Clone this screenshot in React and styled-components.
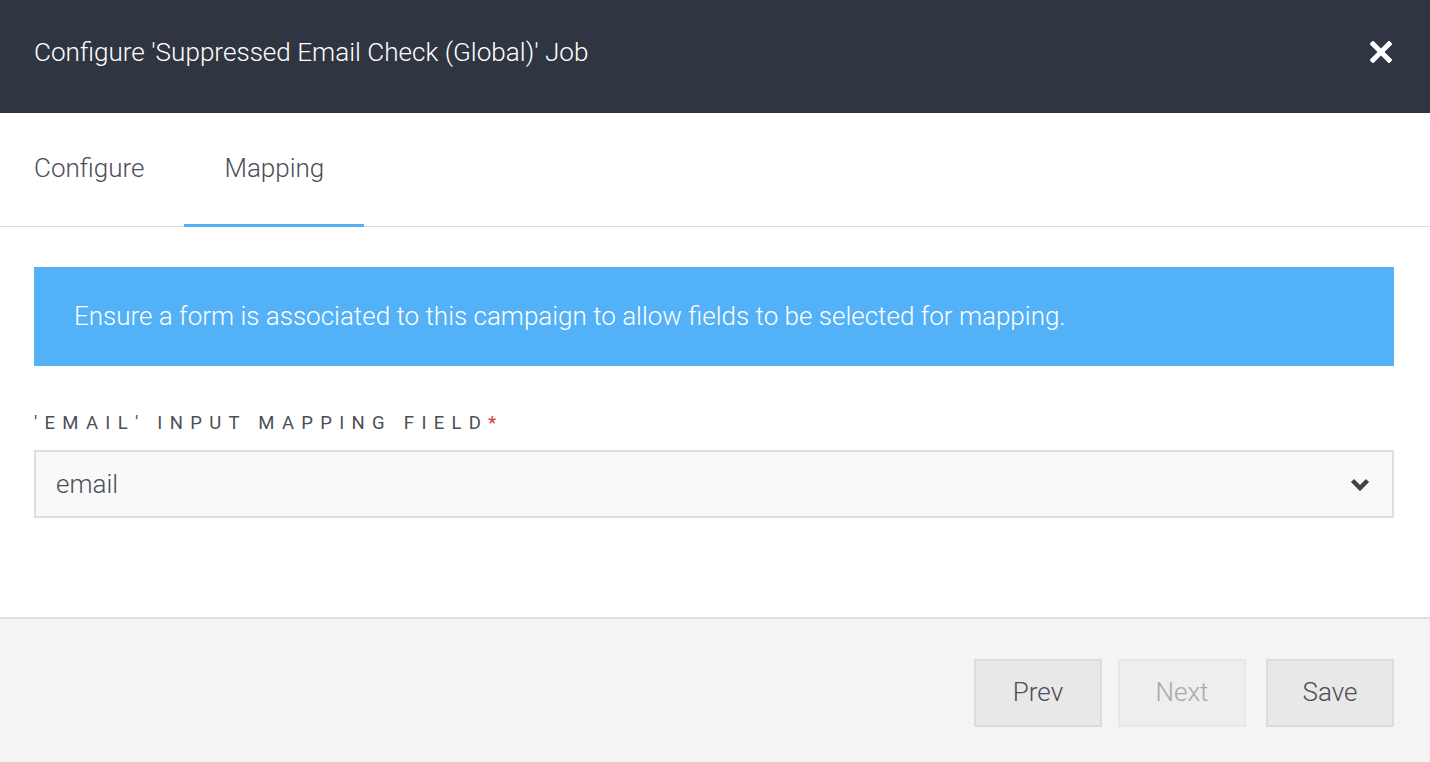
import React from "react";
import styled, { createGlobalStyle } from "styled-components";

const Global = createGlobalStyle`
  html, body { margin: 0; padding: 0; background: #fff; }
  body { font-family: Roboto, "Noto Sans", sans-serif; -webkit-font-smoothing: antialiased; }
  * { box-sizing: border-box; }
`;

const Modal = styled.div`
  width: 1430px;
  height: 762px;
  display: flex;
  flex-direction: column;
  background: #fff;
  overflow: hidden;
`;

const Header = styled.header`
  height: 113px;
  background: #2f3541;
  display: flex;
  align-items: center;
  justify-content: space-between;
  padding: 0 38px 10px 34px;
`;

const Title = styled.h1`
  margin: 0;
  font-size: 26.1px;
  font-weight: 300;
  color: #fff;
`;

const CloseButton = styled.button`
  background: none;
  border: 0;
  padding: 0;
  display: flex;
  cursor: pointer;
`;

const Tabs = styled.nav`
  height: 114px;
  display: flex;
  padding-left: 34px;
  border-bottom: 1px solid #dcdcdc;
`;

const Tab = styled.div`
  display: flex;
  align-items: center;
  padding: 0 40px 2px;
  &:first-child { padding-left: 0; }
  font-size: 26px;
  font-weight: 300;
  color: #4b4e57;
  border-bottom: 3px solid ${(p) => (p.$active ? "#52b1f7" : "transparent")};
  margin-bottom: -1px;
`;

const Body = styled.div`
  flex: 1;
  padding: 40px 36px 0 34px;
  display: flex;
  flex-direction: column;
`;

const Alert = styled.div`
  height: 99px;
  background: #52b1f7;
  color: #fff;
  font-size: 26px;
  font-weight: 300;
  display: flex;
  align-items: center;
  padding: 0 40px 2px;
`;

const Label = styled.label`
  margin-top: 46px;
  font-size: 18.5px;
  letter-spacing: 7.3px;
  color: #4b4e57;
  text-transform: uppercase;
  display: flex;
  align-items: baseline;
`;

const Required = styled.span`
  color: #e0352b;
`;

const Select = styled.div`
  margin-top: 16px;
  height: 68px;
  background: #f9f9f9;
  border: 2px solid #dedede;
  display: flex;
  align-items: center;
  justify-content: space-between;
  padding: 0 22px 0 20px;
  font-size: 26px;
  font-weight: 300;
  color: #4b4e57;
`;

const Footer = styled.footer`
  height: 145px;
  background: #f4f4f4;
  border-top: 2px solid #dedede;
  display: flex;
  justify-content: flex-end;
  align-items: flex-start;
  padding: 40px 36px 0 0;
`;

const Button = styled.button`
  width: 128px;
  height: 68px;
  margin-left: ${(p) => p.$gap || 0}px;
  background: ${(p) => (p.disabled ? "#eeeeee" : "#e8e8e8")};
  border: 2px solid ${(p) => (p.disabled ? "#e8e8e8" : "#dcdcdc")};
  color: ${(p) => (p.disabled ? "#a8a8a8" : "#4b4e57")};
  font-family: Roboto, sans-serif;
  font-size: 26px;
  font-weight: 300;
  padding: 0 0 2px;
  cursor: ${(p) => (p.disabled ? "default" : "pointer")};
`;

export default function App() {
  return (
    <>
      <Global />
      <Modal>
        <Header>
          <Title>Configure 'Suppressed Email Check (Global)' Job</Title>
          <CloseButton aria-label="Close">
            <svg width="22" height="22" viewBox="0 0 22 22">
              <path d="M3 3 L19 19 M19 3 L3 19" stroke="#fff" strokeWidth="5" strokeLinecap="square" />
            </svg>
          </CloseButton>
        </Header>
        <Tabs>
          <Tab>Configure</Tab>
          <Tab $active>Mapping</Tab>
        </Tabs>
        <Body>
          <Alert>Ensure a form is associated to this campaign to allow fields to be selected for mapping.</Alert>
          <Label>
            'Email' Input Mapping Field<Required>*</Required>
          </Label>
          <Select>
            <span>email</span>
            <svg width="20" height="14" viewBox="0 0 20 14">
              <path d="M2.5 3.5 L10 11 L17.5 3.5" fill="none" stroke="#3f434c" strokeWidth="4.5" strokeLinejoin="miter" />
            </svg>
          </Select>
        </Body>
        <Footer>
          <Button>Prev</Button>
          <Button $gap={16} disabled>Next</Button>
          <Button $gap={20}>Save</Button>
        </Footer>
      </Modal>
    </>
  );
}
